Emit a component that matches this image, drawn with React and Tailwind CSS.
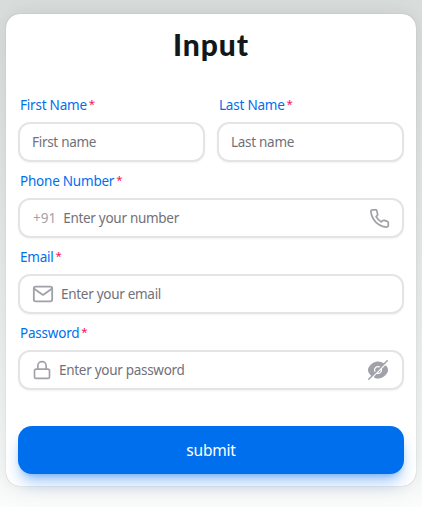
import { FiLock, FiMail, FiPhone } from "react-icons/fi";

function EyeSlash() {
  return (
    <svg viewBox="0 0 24 24" fill="currentColor" className="size-6 shrink-0">
      <path d="M21.2714 9.17834C20.9814 8.71834 20.6714 8.28834 20.3514 7.88834C19.9814 7.41834 19.2814 7.37834 18.8614 7.79834L15.8614 10.7983C16.0814 11.4583 16.1214 12.2183 15.9214 13.0083C15.5714 14.4183 14.4314 15.5583 13.0214 15.9083C12.2314 16.1083 11.4714 16.0683 10.8114 15.8483C10.8114 15.8483 9.38141 17.2783 8.35141 18.3083C7.85141 18.8083 8.01141 19.6883 8.68141 19.9483C9.75141 20.3583 10.8614 20.5683 12.0014 20.5683C13.7814 20.5683 15.5114 20.0483 17.0914 19.0783C18.7014 18.0783 20.1514 16.6083 21.3214 14.7383C22.2714 13.2283 22.2214 10.6883 21.2714 9.17834Z" />
      <path d="M14.0206 9.98062L9.98062 14.0206C9.47062 13.5006 9.14062 12.7806 9.14062 12.0006C9.14062 10.4306 10.4206 9.14062 12.0006 9.14062C12.7806 9.14062 13.5006 9.47062 14.0206 9.98062Z" />
      <path d="M18.25 5.74969L14.86 9.13969C14.13 8.39969 13.12 7.95969 12 7.95969C9.76 7.95969 7.96 9.76969 7.96 11.9997C7.96 13.1197 8.41 14.1297 9.14 14.8597L5.76 18.2497H5.75C4.64 17.3497 3.62 16.1997 2.75 14.8397C1.75 13.2697 1.75 10.7197 2.75 9.14969C3.91 7.32969 5.33 5.90969 6.91 4.91969C8.49 3.94969 10.22 3.42969 12 3.42969C14.23 3.42969 16.39 4.24969 18.25 5.74969Z" />
      <path d="M14.8581 11.9981C14.8581 13.5681 13.5781 14.8581 11.9981 14.8581C11.9381 14.8581 11.8881 14.8581 11.8281 14.8381L14.8381 11.8281C14.8581 11.8881 14.8581 11.9381 14.8581 11.9981Z" />
      <path d="M21.7689 2.22891C21.4689 1.92891 20.9789 1.92891 20.6789 2.22891L2.22891 20.6889C1.92891 20.9889 1.92891 21.4789 2.22891 21.7789C2.37891 21.9189 2.56891 21.9989 2.76891 21.9989C2.96891 21.9989 3.15891 21.9189 3.30891 21.7689L21.7689 3.30891C22.0789 3.00891 22.0789 2.52891 21.7689 2.22891Z" />
    </svg>
  );
}

function Field({ label, placeholder, start, end, type = "text" }) {
  return (
    <label className="block min-w-0 flex-1">
      <span className="flex h-5 items-center gap-0.5 pl-0.5 text-[13.5px] leading-5 text-[#006fee]">
        <span className="tracking-[-0.22px]">{label}</span>
        <span className="-mt-0.5 text-[11.5px] text-[#f31260]">*</span>
      </span>
      <span className="mt-[7px] flex h-10 items-center gap-[7px] rounded-xl border-2 border-[#e4e4e5] px-3 text-[#a1a1aa] shadow-[0_1px_2px_rgba(0,0,0,0.05)]">
        {start}
        <input
          type={type}
          placeholder={placeholder}
          className="min-w-0 flex-1 bg-transparent text-[13.5px] leading-5 tracking-[-0.29px] outline-none placeholder:text-[#71717a]"
        />
        {end}
      </span>
    </label>
  );
}

export default function App() {
  return (
    <main className="h-[507px] overflow-hidden bg-linear-to-b from-[#d9dedd] to-[#fbfcfc] px-1.5 pt-3.5 font-['Noto_Sans','Open_Sans',sans-serif]">
      <form className="h-[472px] w-[410px] rounded-[14px] bg-white px-3 pt-3 shadow-[0_0_15px_rgba(0,0,0,0.03),0_2px_30px_rgba(0,0,0,0.08),0_0_1px_rgba(0,0,0,0.3)]">
        <h1 className="h-10 text-center font-['Lato','Open_Sans',sans-serif] text-[30px] leading-9 font-black tracking-[0.9px] text-[#11181c]">
          Input
        </h1>
        <div className="mt-[29px] flex flex-col gap-[9px]">
          <div className="flex gap-3">
            <Field label="First Name" placeholder="First name" />
            <Field label="Last Name" placeholder="Last name" />
          </div>
          <Field
            label="Phone Number"
            placeholder="Enter your number"
            start={<span className="pl-px text-[13.5px] leading-5">+91</span>}
            end={<FiPhone className="size-[21px] shrink-0" />}
          />
          <Field label="Email" placeholder="Enter your email" start={<FiMail className="size-[22px] shrink-0" />} />
          <Field
            label="Password"
            type="password"
            placeholder="Enter your password"
            start={<FiLock className="size-5 shrink-0" />}
            end={<EyeSlash />}
          />
        </div>
        <button
          type="button"
          className="mt-9 block h-12 w-full rounded-[14px] bg-[#006fee] text-[15.5px] leading-6 tracking-[-0.2px] text-white shadow-[0_10px_15px_-3px_rgba(0,111,238,0.4),0_4px_6px_-4px_rgba(0,111,238,0.4)]"
        >
          submit
        </button>
      </form>
    </main>
  );
}
